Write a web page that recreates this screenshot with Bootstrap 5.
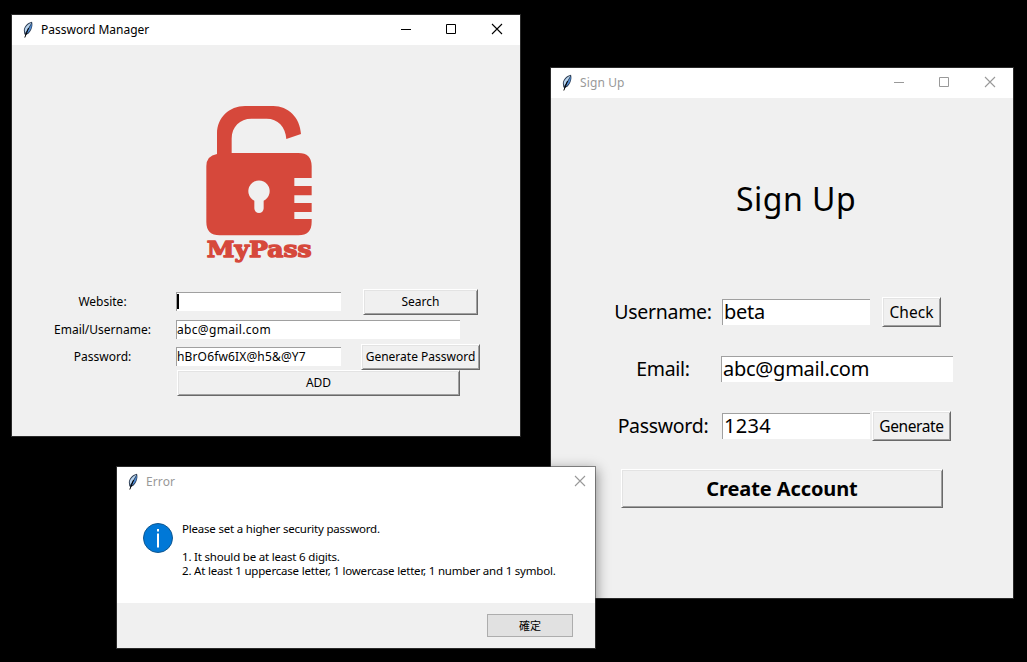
<!DOCTYPE html>
<html lang="en">
<head>
<meta charset="utf-8">
<title>Password Manager</title>
<link href="https://cdn.jsdelivr.net/npm/bootstrap@5.3.0/dist/css/bootstrap.min.css" rel="stylesheet">
<style>
body{background:#000;width:1027px;height:662px;overflow:hidden;font-family:"Noto Sans","Noto Sans CJK TC",sans-serif;color:#000;font-size:12px;line-height:16px}
.win{border:1px solid rgba(70,70,70,.6);background-clip:padding-box;background-color:#f0f0f0}
.win-main{left:11px;top:14px;width:510px;height:423px}
.win-signup{left:550px;top:67px;width:464px;height:532px}
.win-error{left:116px;top:466px;width:480px;height:183px;box-shadow:1px 3px 12px rgba(0,0,0,.42)}
.titlebar{height:30px;background:#fff;padding-left:10px}
.inactive{color:#999}
.inactive .wtitle{letter-spacing:.12px}
.feather{width:12px;height:18px;margin-right:7px}
.ctl{width:46px;height:30px;display:block}
.ctl-narrow{width:30px}
.logo{width:140px;height:190px;margin:45px 0 0 178px}
.entry{background:#fff;border:solid #a0a0a0;border-width:1px 0 0 1px;height:19px;line-height:17px;letter-spacing:.15px}
.entry .mail{letter-spacing:.33px}
.tkbtn{border:1px solid;border-color:#fff #696969 #696969 #fff;box-shadow:inset 1px 1px #e3e3e3,inset -1px -1px #a0a0a0;background:#f0f0f0;height:26px;border-radius:0;padding:0;color:#000;font-size:12px;line-height:22px}
.lab{width:148px;margin-left:16px;padding-left:1px;text-align:center}
.caret{width:2px;height:15px;background:#000;margin-top:1px}

.r1{height:26px;margin-top:9px}.r2{height:29px}.r3{height:26px}
.r1 .entry,.r3 .entry{margin-top:3px}.r2 .entry{margin-top:5px}
.r1 .lab,.r3 .lab{margin-top:5px}.r2 .lab{margin-top:7px}
.e1{width:165px}.e2{width:284px}
.b1{width:115px;margin-left:22px}.b2{width:119px;margin-left:20px}.b3{width:283px;margin-left:165px}

.heading{font-size:32px;line-height:44px;padding-left:28px;margin-top:79px;letter-spacing:.5px}
.big{font-size:20px;line-height:26px}
.big .entry{height:26px;line-height:23px;padding-left:1px;letter-spacing:-.25px}
.big .digits{letter-spacing:.35px}
.big .tkbtn{height:30px;font-size:15.500px;line-height:26px}
.lab2{width:98px;margin:2px 0 0 63px;text-align:center;font-size:19.500px;letter-spacing:-.3px;white-space:nowrap}
.s1{margin-top:76px;height:57px}.s2{height:57px}.s3{height:58px}
.s1 .entry,.s3 .entry{margin-top:2px;margin-left:10px}.s2 .entry{margin-top:2px;margin-left:9px}
.f1{width:148px}.f2{width:232px}
.c1{width:59px;margin-left:12px}.c2{width:79px;margin-left:2px;letter-spacing:-.4px}
.big .c3{width:322px;height:39px;margin-left:70px;font-size:20px;line-height:34px;letter-spacing:-.1px}

.msg{height:106px;padding:26px 0 0 26px}
.dlgtext{font-size:11.500px;line-height:14px;margin:-1px 0 0 9px;letter-spacing:-.2px}
.foot{padding:11px 22px 0 0}
.okbtn{width:86px;height:23px;background:#e1e1e1;border:1px solid #adadad;border-radius:0;padding:0;font-size:11px;line-height:19px;color:#000}
</style>
</head>
<body class="position-relative">
<svg width="0" height="0" class="position-absolute">
<symbol id="feather" viewBox="0 0 12 18"><path d="M10 .8C6 1.500 2.500 5 1.800 9L2.300 13L3.500 14.200L6.500 12.500C9.500 9.500 11.200 5 10 .8Z" fill="#2a3a50"/><path d="M9.400 1.700C6 3 3.100 6 2.700 9L3.200 12C5 9 7 6 9.400 1.700Z" fill="#b8d4ee"/><path d="M9.800 2.200C8 6 6 9.500 4.100 12.600L6.200 11.500C8.800 9 10 6 9.800 2.200Z" fill="#4c8ad4"/><path d="M6.500 7L2.800 16.500" stroke="#000" stroke-width="1" fill="none"/></symbol>
<symbol id="min" viewBox="0 0 46 30"><path d="M19 14.500h10" stroke="currentColor" fill="none"/></symbol>
<symbol id="max" viewBox="0 0 46 30"><path d="M18.500 9.500h9v9h-9z" stroke="currentColor" fill="none"/></symbol>
<symbol id="close" viewBox="0 0 46 30"><path d="M18 9l10 10M28 9l-10 10" stroke="currentColor" stroke-width="1.100" fill="none"/></symbol>
</svg>

<section class="win win-main position-absolute">
  <div class="titlebar d-flex align-items-center"><svg class="feather"><use href="#feather"/></svg><span class="wtitle me-auto">Password Manager</span>
    <svg class="ctl"><use href="#min"/></svg><svg class="ctl"><use href="#max"/></svg><svg class="ctl"><use href="#close"/></svg></div>
  <svg class="logo d-block" viewBox="0 0 420 570">
    <g fill="#d6483b"><path fill-rule="evenodd" d="M81 192V130C81 83 118 48 165 48H250C294 48 330 82 333 132L289 147C287 110 263 86 230 86H184C150 86 125 110 125 146V189H325Q365 189 365 229V264H313V288H365V316H313V339H365V366H313V387H365V396Q365 436 325 436H89Q49 436 49 396V229Q49 197 81 192ZM193 332V355A14 14 0 0 0 221 355V332A32 32 0 1 0 193 332Z"/>
    <text x="50" y="502" textLength="315" lengthAdjust="spacingAndGlyphs" font-family="DejaVu Serif, serif" font-weight="bold" font-size="69" stroke="#d6483b" stroke-width="4" stroke-linejoin="round">MyPass</text></g>
  </svg>
  <div class="d-flex align-items-start r1"><div class="lab">Website:</div><div class="entry e1"><div class="caret"></div></div><button class="btn tkbtn b1">Search</button></div>
  <div class="d-flex align-items-start r2"><div class="lab">Email/Username:</div><div class="entry e2"><span class="mail">abc@gmail.com</span></div></div>
  <div class="d-flex align-items-start r3"><div class="lab">Password:</div><div class="entry e1">hBrO6fw6IX@h5&amp;@Y7</div><button class="btn tkbtn b2">Generate Password</button></div>
  <button class="btn tkbtn b3 d-block">ADD</button>
</section>

<section class="win win-signup position-absolute">
  <div class="titlebar d-flex align-items-center inactive"><svg class="feather"><use href="#feather"/></svg><span class="wtitle me-auto">Sign Up</span>
    <svg class="ctl"><use href="#min"/></svg><svg class="ctl"><use href="#max"/></svg><svg class="ctl"><use href="#close"/></svg></div>
  <div class="heading text-center">Sign Up</div>
  <div class="big">
    <div class="d-flex align-items-start s1"><div class="lab2">Username:</div><div class="entry f1">beta</div><button class="btn tkbtn c1">Check</button></div>
    <div class="d-flex align-items-start s2"><div class="lab2">Email:</div><div class="entry f2">abc@gmail.com</div></div>
    <div class="d-flex align-items-start s3"><div class="lab2">Password:</div><div class="entry f1 digits">1234</div><button class="btn tkbtn c2">Generate</button></div>
    <button class="btn tkbtn c3 d-block fw-bold">Create Account</button>
  </div>
</section>

<section class="win win-error position-absolute">
  <div class="titlebar d-flex align-items-center inactive"><svg class="feather"><use href="#feather"/></svg><span class="wtitle me-auto">Error</span>
    <svg class="ctl ctl-narrow" viewBox="8 0 30 30"><path d="M18 9l10 10M28 9l-10 10" stroke="currentColor" stroke-width="1.100" fill="none"/></svg></div>
  <div class="msg d-flex align-items-start bg-white">
    <svg width="30" height="30" viewBox="0 0 30 30"><circle cx="15" cy="15" r="14.500" fill="#0078d7" stroke="#11578f"/><path d="M15 10.500v14M15 6v2.500" stroke="#fff" stroke-width="2" fill="none"/></svg>
    <div class="dlgtext">Please set a higher security password.<br><br>1. It should be at least 6 digits.<br>2. At least 1 uppercase letter, 1 lowercase letter, 1 number and 1 symbol.</div>
  </div>
  <div class="foot d-flex justify-content-end"><button class="btn okbtn">確定</button></div>
</section>
<script src="https://cdn.jsdelivr.net/npm/bootstrap@5.3.0/dist/js/bootstrap.bundle.min.js"></script>
</body>
</html>
